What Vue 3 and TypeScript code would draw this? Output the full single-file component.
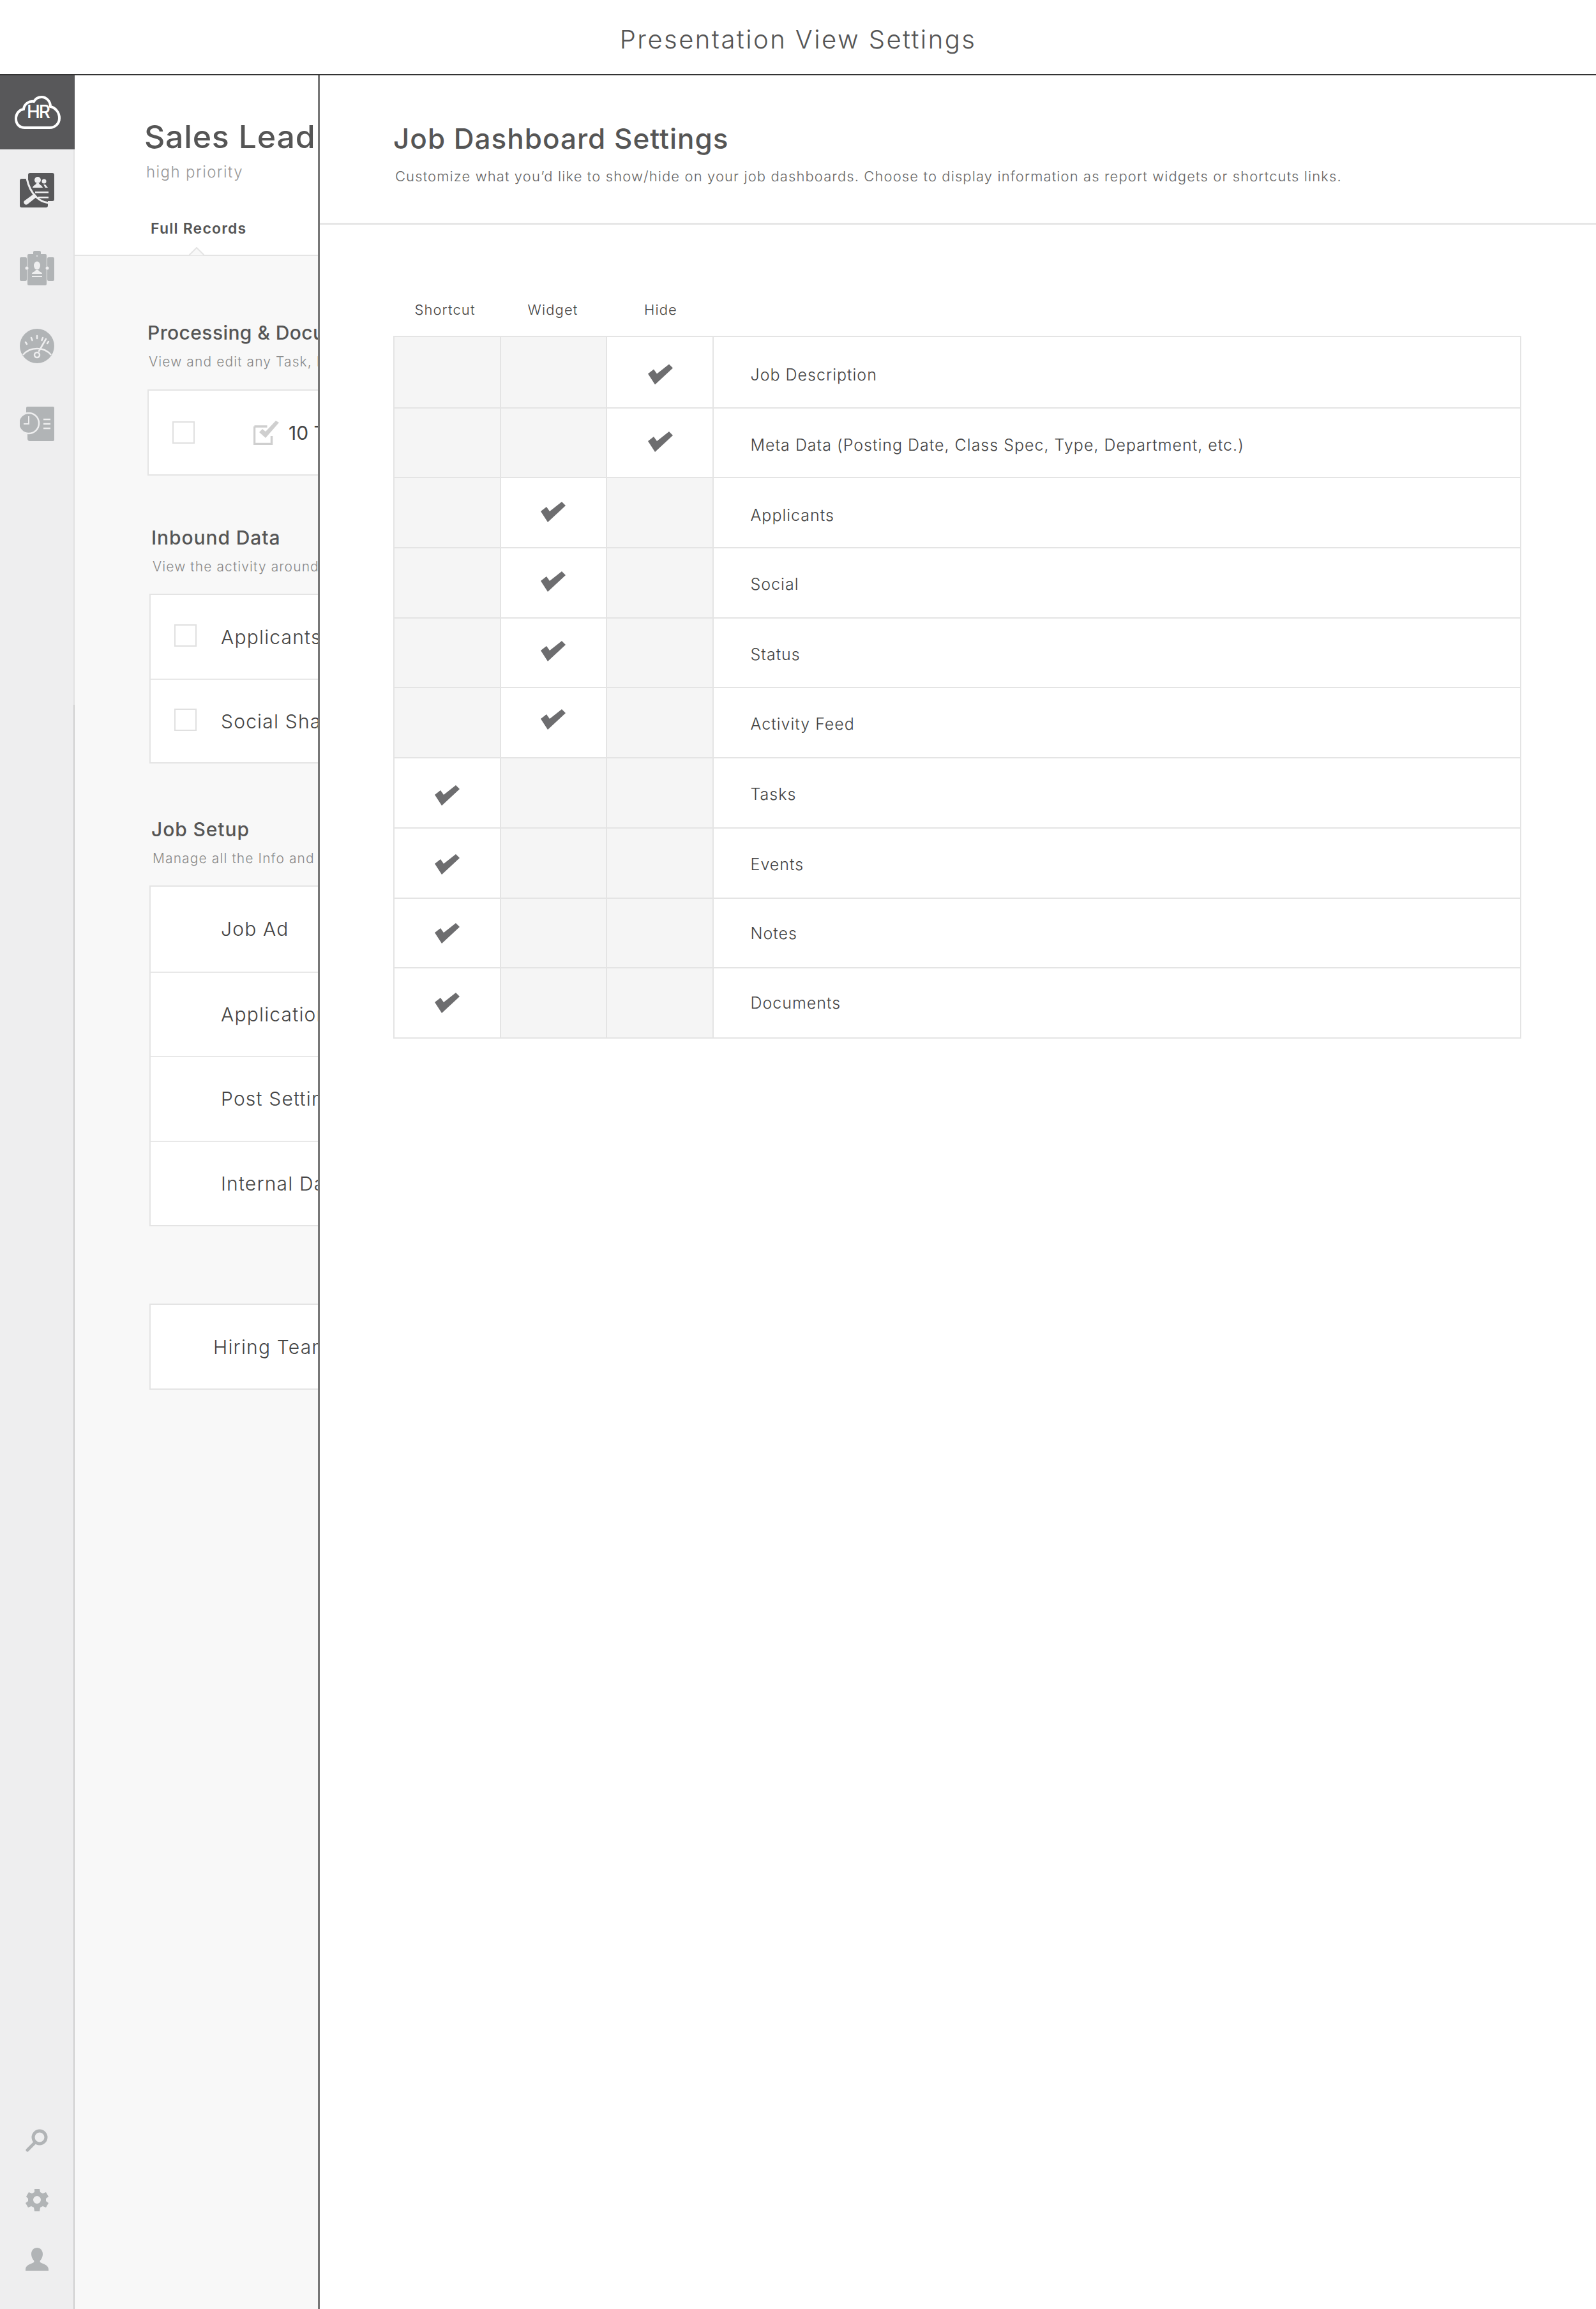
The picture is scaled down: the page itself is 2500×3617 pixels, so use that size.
<script setup lang="ts">
interface SettingRow {
  label: string;
  choice: 0 | 1 | 2;
  checkShift: number;
  labelShift: number;
}

const rows: SettingRow[] = [
  { label: 'Job Description', choice: 2, checkShift: 3.5, labelShift: 4 },
  { label: 'Meta Data (Posting Date, Class Spec, Type, Department, etc.)', choice: 2, checkShift: -2, labelShift: 3 },
  { label: 'Applicants', choice: 1, checkShift: -1, labelShift: 4 },
  { label: 'Social', choice: 1, checkShift: -2, labelShift: 2 },
  { label: 'Status', choice: 1, checkShift: -3, labelShift: 2 },
  { label: 'Activity Feed', choice: 1, checkShift: -5, labelShift: 2 },
  { label: 'Tasks', choice: 0, checkShift: 4, labelShift: 2 },
  { label: 'Events', choice: 0, checkShift: 2, labelShift: 2 },
  { label: 'Notes', choice: 0, checkShift: 1, labelShift: 1 },
  { label: 'Documents', choice: 0, checkShift: 0, labelShift: 0 }
];

const columns = ['Shortcut', 'Widget', 'Hide'];
const setupRows = ['Job Ad', 'Application', 'Post Settings', 'Internal Data'];
</script>

<template>
  <div class="page">
    <header class="topbar">Presentation View Settings</header>

    <div class="workspace">
      <nav class="sidebar">
        <div class="logo">
          <svg class="cloud" viewBox="0 0 72 52" width="72" height="52">
            <path d="M16 50C7 50 2 44 2 36c0-8 5-14 12-15 1-8 8-13 16-12 3-5 8-7 12-7 8 0 14 7 14 15 8 2 14 9 14 18 0 9-7 15-15 15z" />
          </svg>
          <span class="logo-text">HR</span>
        </div>

        <div class="nav-main">
          <svg class="nav-icon active" viewBox="0 0 54 54" width="54" height="54">
            <rect x="0" y="9" width="44" height="45" rx="3" />
            <rect x="13" y="0" width="41" height="44" rx="3" />
            <path d="M10 1c2 22 14 44 36 46" fill="none" stroke="#eeeeef" stroke-width="3" />
            <g fill="#eeeeef">
              <circle cx="28" cy="11" r="5" />
              <path d="M20 23c1-4 5-4 6-7h4c1 3 5 3 6 7z" />
              <circle cx="38" cy="13" r="3.500" />
              <path d="M37 18l3 0 4 5h-4z" />
              <rect x="24" y="29" width="21" height="2.500" />
              <rect x="29" y="37" width="16" height="2.500" />
              <path d="M8 43l15-11 4 5-15 12a3 3 0 0 1-4-6z" />
            </g>
          </svg>

          <svg class="nav-icon" viewBox="0 0 54 54" width="54" height="54">
            <rect x="0" y="10" width="11" height="37" rx="2" />
            <rect x="43" y="10" width="11" height="37" rx="2" />
            <rect x="12" y="5" width="30" height="49" rx="2" />
            <rect x="21" y="0" width="12" height="8" rx="2" />
            <g fill="#eeeeef">
              <circle cx="27" cy="8" r="1" />
              <ellipse cx="27" cy="23" rx="5" ry="6.500" />
              <path d="M19 36c0-3 5-3 6-6h4c1 3 6 3 6 6z" />
              <rect x="19" y="39" width="16" height="2" />
              <circle cx="11" cy="27" r="2.500" />
              <circle cx="43" cy="27" r="2.500" />
            </g>
          </svg>

          <svg class="nav-icon" viewBox="0 0 54 54" width="54" height="54">
            <circle cx="27" cy="27" r="27" />
            <path d="M5 41c5-6 13-10 22-10s17 4 22 10" fill="none" stroke="#eeeeef" stroke-width="2.500" />
            <g stroke="#eeeeef" stroke-width="2.500" fill="none" stroke-linecap="round">
              <path d="M9 21l2 3" />
              <path d="M18 14l1.500 4" />
              <path d="M27 11v4" />
              <path d="M36 14l-1.500 4" />
              <path d="M45 20l-2 3" />
              <path d="M30 35l11-19" />
              <circle cx="27" cy="41" r="4" />
            </g>
          </svg>

          <svg class="nav-icon" viewBox="0 0 54 54" width="54" height="54">
            <path d="M10 2a2 2 0 0 1 2-2h40a2 2 0 0 1 2 2v50a2 2 0 0 1-2 2H16c-3 0-4-2-4-4V40H10z" />
            <circle cx="14" cy="26" r="16" stroke="#eeeeef" stroke-width="2.500" />
            <path d="M14 15v12H6" fill="none" stroke="#eeeeef" stroke-width="2" />
            <path d="M37 20h11M37 27h11M37 34h11" stroke="#eeeeef" stroke-width="2.500" />
          </svg>
        </div>

        <div class="nav-bottom">
          <svg class="nav-small" viewBox="0 0 36 36" width="36" height="36">
            <circle cx="22" cy="13" r="10" fill="none" stroke="#b1b4b6" stroke-width="5" />
            <path d="M14 22L3 33" stroke="#b1b4b6" stroke-width="5" stroke-linecap="round" />
          </svg>
          <svg class="nav-small" viewBox="0 0 36 36" width="36" height="36">
            <path d="M14 1h8l1 5 4 2 5-2 4 7-4 3v4l4 3-4 7-5-2-4 2-1 6h-8l-1-6-4-2-5 2-4-7 4-3v-4L1 13l4-7 5 2 4-2zM18 12a6 6 0 1 0 0 12 6 6 0 0 0 0-12z" fill-rule="evenodd" />
          </svg>
          <svg class="nav-small" viewBox="0 0 36 36" width="36" height="36">
            <path d="M18 0c5 0 9 4 9 10 0 4-2 8-4 10-1 2 0 3 2 4 5 2 11 4 11 10v2H0v-2c0-6 6-8 11-10 2-1 3-2 2-4-2-2-4-6-4-10 0-6 4-10 9-10z" />
          </svg>
        </div>
      </nav>

      <section class="records">
        <div class="records-head">
          <h1>Sales Lead</h1>
          <p class="priority">high priority</p>
          <div class="tab">Full Records</div>
          <svg class="caret" viewBox="0 0 24 14" width="24" height="14">
            <path d="M0 13L12 1l12 12" fill="#f8f8f8" stroke="#e4e4e4" stroke-width="2" />
          </svg>
        </div>

        <div class="records-body">
          <h2 class="first">Processing &amp; Documents</h2>
          <p class="hint first">View and edit any Task, Event, Note or Document</p>
          <div class="card first">
            <div class="row">
              <span class="box"></span>
              <svg class="tick-box" viewBox="0 0 40 38" width="40" height="38">
                <path d="M1.500 9h20M1.500 9v27.500h27V24" fill="none" stroke="#cfcfcf" stroke-width="3.500" />
                <path d="M9 18l10 9L40 3l-5-3-16 17-5-4z" fill="#cfcfcf" />
              </svg>
              <span class="count">10 Tasks</span>
            </div>
          </div>

          <h2>Inbound Data</h2>
          <p class="hint">View the activity around this job</p>
          <div class="card">
            <div class="row">
              <span class="box"></span>
              <span class="row-text">Applicants</span>
            </div>
            <div class="row">
              <span class="box"></span>
              <span class="row-text">Social Shares</span>
            </div>
          </div>

          <h2 class="setup">Job Setup</h2>
          <p class="hint">Manage all the Info and settings</p>
          <div class="card">
            <div v-for="name in setupRows" :key="name" class="row plain">
              <span class="row-text">{{ name }}</span>
            </div>
          </div>

          <div class="card team">
            <span class="row-text">Hiring Team</span>
          </div>
        </div>
      </section>

      <main class="settings">
        <div class="settings-head">
          <h1>Job Dashboard Settings</h1>
          <p>Customize what you’d like to show/hide on your job dashboards. Choose to display information as report widgets or shortcuts links.</p>
        </div>

        <div class="settings-body">
          <div class="col-heads">
            <span v-for="col in columns" :key="col">{{ col }}</span>
          </div>
          <div class="grid">
            <div v-for="row in rows" :key="row.label" class="grid-row">
              <div
                v-for="(col, i) in columns"
                :key="col"
                class="cell"
                :class="{ off: row.choice !== i }"
              >
                <svg
                  v-if="row.choice === i"
                  class="check"
                  :style="{ transform: `translateY(${row.checkShift}px)` }"
                  viewBox="0 0 39 32"
                  width="39"
                  height="32"
                >
                  <path d="M0 15l9-7 5 7L33 0l6 6-28 26z" />
                </svg>
              </div>
              <div class="label">
                <span :style="{ transform: `translateY(${row.labelShift}px)` }">{{ row.label }}</span>
              </div>
            </div>
          </div>
        </div>
      </main>
    </div>
  </div>
</template>

<style>
html,
body {
  margin: 0;
  background: #fff;
}
</style>

<style scoped>
.page {
  width: 2500px;
  height: 3617px;
  display: flex;
  flex-direction: column;
  overflow: hidden;
  font-family: "Inter", "Liberation Sans", sans-serif;
  color: #555;
  background: #fff;
}

.topbar {
  height: 118px;
  flex: none;
  box-sizing: border-box;
  border-bottom: 2px solid #333;
  display: flex;
  align-items: center;
  justify-content: center;
  padding-top: 6px;
  font-size: 40px;
  font-weight: 300;
  letter-spacing: 2.450px;
  color: #555;
}

.workspace {
  flex: 1;
  display: flex;
  min-height: 0;
}

/* sidebar */
.sidebar {
  width: 117px;
  flex: none;
  display: flex;
  flex-direction: column;
  box-sizing: border-box;
  background: #eeeeef;
  border-right: 2px solid #d6d6d6;
  border-image: linear-gradient(#e2e2e2 986px, #cfcfcf 986px) 1;
}

.logo {
  position: relative;
  height: 116px;
  margin-right: -2px;
  background: #58585a;
  display: flex;
  align-items: center;
  justify-content: center;
}

.cloud {
  fill: none;
  stroke: #fff;
  stroke-width: 4;
}

.logo-text {
  position: absolute;
  left: 42px;
  top: 40px;
  font-size: 28px;
  line-height: 34px;
  font-weight: 500;
  letter-spacing: -2px;
  color: #fff;
}

.nav-main {
  flex: 1;
  display: flex;
  flex-direction: column;
  align-items: center;
  gap: 68px;
  padding-top: 37px;
}

.nav-icon {
  fill: #b1b4b6;
}

.nav-icon.active {
  fill: #58585a;
}

.nav-bottom {
  display: flex;
  flex-direction: column;
  align-items: center;
  gap: 57px;
  padding-bottom: 60px;
}

.nav-small {
  fill: #b1b4b6;
}

/* records column behind the panel */
.records {
  width: 381px;
  flex: none;
  overflow: hidden;
  display: flex;
  flex-direction: column;
  background: #f8f8f8;
}

.records-head {
  position: relative;
  height: 283px;
  flex: none;
  box-sizing: border-box;
  border-bottom: 2px solid #e4e4e4;
  background: #fff;
  padding-left: 109px;
  white-space: nowrap;
}

.records-head h1 {
  margin: 0;
  padding-top: 66px;
  font-size: 50px;
  line-height: 60px;
  font-weight: 500;
  letter-spacing: 0.800px;
  color: #555;
}

.priority {
  margin: 0;
  padding: 11px 0 0 3px;
  font-size: 24px;
  line-height: 30px;
  letter-spacing: 1.400px;
  font-weight: 300;
  color: #999;
}

.tab {
  padding: 58px 0 0 10px;
  font-size: 23px;
  line-height: 30px;
  font-weight: 600;
  letter-spacing: 1.200px;
  color: #555;
}

.caret {
  position: absolute;
  left: 179px;
  bottom: -2px;
}

.records-body {
  flex: 1;
  padding-left: 117px;
  white-space: nowrap;
}

h2 {
  margin: 0 0 0 3px;
  padding-top: 79px;
  font-size: 30px;
  line-height: 36px;
  font-weight: 500;
  letter-spacing: 0.900px;
  color: #555;
}

h2.first {
  padding-top: 102px;
  margin-left: -3px;
  letter-spacing: 0.400px;
}

h2.setup {
  padding-top: 85px;
}

.hint {
  margin: 0;
  padding: 15px 0 0 5px;
  font-size: 21px;
  line-height: 26px;
  font-weight: 300;
  letter-spacing: 1.100px;
  color: #888;
}

.hint.first {
  margin-left: -6px;
}

.card {
  width: 600px;
  margin-top: 29px;
  box-sizing: border-box;
  background: #fff;
  border: 2px solid #e4e4e4;
}

.card.first {
  margin-left: -3px;
  margin-top: 30px;
}

.row {
  height: 131px;
  display: flex;
  align-items: center;
  padding-left: 37px;
  box-sizing: border-box;
}

.row + .row {
  border-top: 2px solid #e8e8e8;
}

.row.plain {
  height: 132.500px;
  padding-left: 110px;
}

.box {
  width: 35px;
  height: 35px;
  flex: none;
  box-sizing: border-box;
  border: 2px solid #e0e0e0;
  margin-right: 38px;
  margin-bottom: 5px;
}

.card.first .box {
  margin-bottom: 0;
}

.tick-box {
  margin-left: 54px;
  margin-right: 15px;
}

.count {
  font-size: 30px;
  color: #444;
}

.row-text {
  font-size: 30px;
  font-weight: 300;
  letter-spacing: 1.200px;
  color: #444;
}

.card.team {
  height: 135px;
  margin-top: 121px;
  display: flex;
  align-items: center;
  padding-left: 98px;
}

/* settings panel */
.settings {
  flex: 1;
  min-width: 0;
  box-sizing: border-box;
  border-left: 3px solid #777;
  background: #fff;
}

.settings-head {
  height: 234px;
  box-sizing: border-box;
  border-bottom: 3px solid #e6e6e6;
  padding: 69px 0 0 115px;
}

.settings-head h1 {
  margin: 0;
  font-size: 44px;
  line-height: 60px;
  font-weight: 500;
  letter-spacing: 1px;
  color: #555;
}

.settings-head p {
  margin: 15px 0 0 3px;
  font-size: 22px;
  line-height: 28px;
  font-weight: 300;
  letter-spacing: 1.100px;
  color: #666;
}

.settings-body {
  padding: 119px 0 0 115px;
}

.col-heads {
  display: flex;
  height: 55px;
  margin-left: -3.500px;
}

.col-heads span {
  width: 169px;
  text-align: center;
  font-size: 22px;
  line-height: 28px;
  font-weight: 300;
  letter-spacing: 1.100px;
  color: #444;
}

.grid {
  width: 1767px;
  box-sizing: border-box;
  border: 2px solid #e4e4e4;
}

.grid-row {
  display: flex;
  height: 109.700px;
  box-sizing: border-box;
}

.grid-row + .grid-row {
  border-top: 2px solid #e4e4e4;
}

.cell {
  width: 166.500px;
  flex: none;
  box-sizing: border-box;
  border-right: 2px solid #e4e4e4;
  display: flex;
  align-items: center;
  justify-content: center;
  background: #fff;
}

.cell.off {
  background: #f5f5f5;
}

.cell:nth-child(3) .check {
  margin-left: 3px;
}

.check {
  fill: #6d6d6f;
}

.label {
  flex: 1;
  display: flex;
  align-items: center;
  padding-left: 58px;
  font-size: 25px;
  font-weight: 300;
  letter-spacing: 1px;
  color: #444;
}

.label span {
  display: block;
}
</style>
